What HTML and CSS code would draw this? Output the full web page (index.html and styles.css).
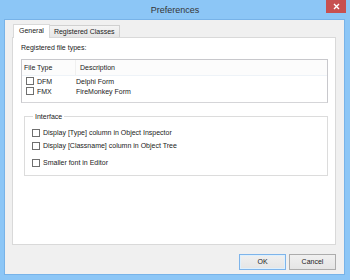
FILE: index.html
```html
<!DOCTYPE html>
<html>
<head>
<meta charset="utf-8">
<link rel="stylesheet" href="styles.css">
</head>
<body>
<div class="window">
  <div class="titlebar">
    <span></span>
    <span class="title">Preferences</span>
    <span class="close">
      <svg width="7" height="7" viewBox="0 0 7 7"><path d="M1 1L6 6M6 1L1 6" stroke="#fff" stroke-width="1.4"/></svg>
    </span>
  </div>
  <div class="client">
    <div class="tabs">
      <div class="tab active">General</div>
      <div class="tab">Registered Classes</div>
    </div>
    <div class="page">
      <div class="label">Registered file types:</div>
      <div class="listbox">
        <div class="lhead">
          <div class="c1">File Type</div>
          <div class="c2">Description</div>
          <div class="c3"></div>
        </div>
        <div class="lrow"><span class="cb"></span><span class="ext">DFM</span><span>Delphi Form</span></div>
        <div class="lrow"><span class="cb"></span><span class="ext">FMX</span><span>FireMonkey Form</span></div>
      </div>
      <fieldset class="group">
        <legend>Interface</legend>
        <div class="check"><span class="cb"></span>Display [Type] column in Object Inspector</div>
        <div class="check"><span class="cb"></span>Display [Classname] column in Object Tree</div>
        <div class="check gap"><span class="cb"></span>Smaller font in Editor</div>
      </fieldset>
    </div>
    <div class="buttons">
      <div class="btn default">OK</div>
      <div class="btn">Cancel</div>
    </div>
  </div>
</div>
</body>
</html>
```
FILE: styles.css
```css
html, body {
  margin: 0;
  padding: 0;
}
body {
  width: 350px;
  height: 280px;
  background: #8cc6f6;
  font-family: "Liberation Sans", Arial, sans-serif;
  font-size: 7px;
  color: #222;
  overflow: hidden;
}
.window {
  width: 350px;
  height: 280px;
  display: flex;
  flex-direction: column;
}
.titlebar {
  height: 20px;
  display: grid;
  grid-template-columns: 1fr auto 1fr;
  align-items: start;
  flex: none;
}
.title {
  font-size: 9px;
  color: #353535;
  line-height: 20px;
}
.close {
  justify-self: end;
  margin-right: 4px;
  width: 20px;
  height: 13px;
  background: #c75050;
  display: flex;
  align-items: center;
  justify-content: center;
}
.close svg { display: block; }
.client {
  flex: 1;
  margin: 0 6px 7px 5px;
  background: #f0f0f0;
  box-shadow: 0 0 0 1px #78b3e8;
  display: flex;
  flex-direction: column;
  padding: 4px 8px 4px 7px;
}
.tabs {
  display: flex;
  padding-left: 1px;
  height: 13px;
  align-items: flex-end;
  position: relative;
  z-index: 1;
}
.tab {
  height: 11px;
  line-height: 11px;
  padding: 0 4px;
  border: 1px solid #d0d0d0;
  border-bottom: none;
  background: linear-gradient(#f4f4f4, #e6e6e6);
  font-size: 7px;
  color: #222;
}
.tab.active {
  height: 13px;
  line-height: 12px;
  background: #fff;
  border-color: #d9d9d9;
  padding: 0 5px;
  margin-bottom: -1px;
}
.tab + .tab { border-left: none; }
.page {
  height: 208px;
  background: #fff;
  border: 1px solid #d9d9d9;
  padding: 5px 7px 0 8px;
  box-sizing: border-box;
}
.label {
  line-height: 10px;
}
.listbox {
  margin-top: 6px;
  height: 44px;
  box-sizing: border-box;
  border: 1px solid #c8c8cc;
  border-bottom-color: #d5d5d8;
}
.lhead {
  display: flex;
  height: 15px;
  line-height: 15px;
  background: #fcfcfc;
  border-bottom: 1px solid #eef3f8;
}
.lhead .c1 {
  width: 51px;
  padding-left: 2px;
  border-right: 1px solid #f0f0f0;
}
.lhead .c2 {
  padding-left: 4px;
  flex: 1;
}
.lrow {
  display: flex;
  align-items: center;
  height: 10px;
  padding-left: 4px;
}
.lrow:first-of-type { margin-top: 1px; }
.cb {
  display: inline-block;
  width: 6px;
  height: 6px;
  border: 1px solid #6f6f6f;
  background: #fff;
  flex: none;
}
.lrow .cb { margin-right: 3px; }
.lrow .ext { width: 39px; }
.group {
  margin: 9px 0 0 3px;
  padding: 5px 0 0 7px;
  height: 64px;
  box-sizing: border-box;
  border: 1px solid #dcdcdc;
  min-width: 0;
}
.group legend {
  padding: 0 2px;
  margin-left: 1px;
  line-height: 9px;
}
.check {
  display: flex;
  align-items: center;
  height: 13px;
}
.check .cb { margin-right: 3px; }
.check.gap { margin-top: 4px; }
.buttons {
  display: flex;
  justify-content: flex-end;
  gap: 3px;
  margin-top: 9px;
}
.btn {
  width: 45px;
  height: 14px;
  line-height: 14px;
  text-align: center;
  border: 1px solid #acacac;
  background: linear-gradient(#f0f0f0, #e5e5e5);
  font-size: 7px;
}
.btn.default {
  border-color: #7eb4ea;
  box-shadow: inset 0 0 0 1px #def0fd;
}
```
